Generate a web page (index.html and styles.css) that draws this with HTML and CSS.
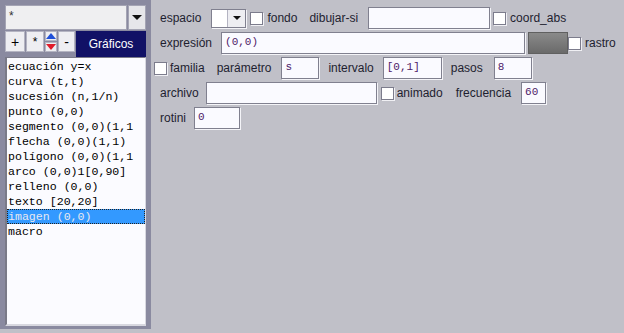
FILE: index.html
```html
<!DOCTYPE html>
<html lang="es">
<head>
  <meta charset="UTF-8">
  <title>Gráficos</title>
  <link rel="stylesheet" href="styles.css">
</head>
<body>

  <div class="app">
    <div class="side">
      <div class="combo">
        <div class="combo-field">*</div>
        <div class="combo-btn"><span class="tri"></span></div>
      </div>

      <div class="tools">
        <button class="tool tool-plus">+</button>
        <button class="tool tool-star">*</button>
        <div class="tool-arrows">
          <button class="arrow arrow-up"><span class="tri-up"></span></button>
          <button class="arrow arrow-down"><span class="tri-down"></span></button>
        </div>
        <button class="tool tool-minus">-</button>
        <div class="tab">Gráficos</div>
      </div>

      <ul class="list">
        <li>ecuación y=x</li>
        <li>curva (t,t)</li>
        <li>sucesión (n,1/n)</li>
        <li>punto (0,0)</li>
        <li>segmento (0,0)(1,1</li>
        <li>flecha (0,0)(1,1)</li>
        <li>polígono (0,0)(1,1</li>
        <li>arco (0,0)1[0,90]</li>
        <li>relleno (0,0)</li>
        <li>texto [20,20]</li>
        <li class="selected">imagen (0,0)</li>
        <li>macro</li>
      </ul>
    </div>

    <div class="main">
      <div class="row indent">
        <span class="lbl">espacio</span>
        <div class="mini-combo m10"><div class="mini-field"></div><div class="mini-btn"><span class="tri small"></span></div></div>
        <span class="chk m4"></span>
        <span class="lbl m4">fondo</span>
        <span class="lbl m12">dibujar-si</span>
        <div class="field m10 w122"></div>
        <span class="chk m3"></span>
        <span class="lbl m4">coord_abs</span>
      </div>

      <div class="row indent">
        <span class="lbl">expresión</span>
        <div class="field m9 w304">(0,0)</div>
        <div class="swatch m3"></div>
        <span class="chk"></span>
        <span class="lbl m4">rastro</span>
      </div>

      <div class="row">
        <span class="chk"></span>
        <span class="lbl m3">familia</span>
        <span class="lbl m12">parámetro</span>
        <div class="field m10 w38">s</div>
        <span class="lbl m9">intervalo</span>
        <div class="field m9 w59">[0,1]</div>
        <span class="lbl m9">pasos</span>
        <div class="field m11 w38">8</div>
      </div>

      <div class="row indent">
        <span class="lbl">archivo</span>
        <div class="field m7 w171"></div>
        <span class="chk m4"></span>
        <span class="lbl m3">animado</span>
        <span class="lbl m13">frecuencia</span>
        <div class="field m10 w25">60</div>
      </div>

      <div class="row indent">
        <span class="lbl">rotini</span>
        <div class="field m8 w46">0</div>
      </div>
    </div>
  </div>

</body>
</html>
```

FILE: styles.css
```css
body {
  margin: 0;
  padding: 0;
  background-color: #c0c0c8;
  font-family: "Liberation Sans", Arial, sans-serif;
  font-size: 12px;
  color: #1e1e30;
}

.app {
  display: flex;
  height: 333px;
  overflow: hidden;
}

/* left column */
.side {
  width: 151px;
  height: 329px;
  box-sizing: border-box;
  padding: 5px 5px 0 5px;
  background-color: #8a8aa0;
  display: flex;
  flex-direction: column;
}

.combo {
  display: flex;
  height: 25px;
}

.combo-field {
  width: 122px;
  box-sizing: border-box;
  border: 1px solid #a4a4b4;
  background-color: #efeff1;
  padding: 3px 3px;
  font-size: 12px;
  color: #333;
}

.combo-btn {
  width: 18px;
  margin-left: 1px;
  box-sizing: border-box;
  border: 1px solid #a4a4b4;
  background-color: #e6e6ea;
  display: flex;
  align-items: center;
  justify-content: center;
}

.tri {
  width: 0;
  height: 0;
  border-left: 5px solid transparent;
  border-right: 5px solid transparent;
  border-top: 5px solid #111;
}

.tri.small {
  border-left-width: 4px;
  border-right-width: 4px;
  border-top-width: 4px;
}

.tools {
  display: flex;
  align-items: flex-start;
  gap: 1px;
  margin-top: 1px;
  height: 26px;
}

.tool {
  height: 21px;
  padding: 0;
  border: 1px solid #b4b4c2;
  background-color: #eeeef2;
  font-family: "Liberation Sans", Arial, sans-serif;
  font-size: 14px;
  color: #000;
  cursor: pointer;
}

.tool-plus { width: 20px; }
.tool-star { width: 18px; font-size: 12px; }
.tool-minus { width: 17px; }

.tool-arrows {
  width: 12px;
  height: 21px;
  display: flex;
  flex-direction: column;
  gap: 1px;
}

.arrow {
  height: 10px;
  padding: 0;
  border: 1px solid #b4b4c2;
  background-color: #eeeef2;
  display: flex;
  align-items: center;
  justify-content: center;
}

.tri-up {
  width: 0;
  height: 0;
  border-left: 5px solid transparent;
  border-right: 5px solid transparent;
  border-bottom: 6px solid #1f4fd8;
}

.tri-down {
  width: 0;
  height: 0;
  border-left: 5px solid transparent;
  border-right: 5px solid transparent;
  border-top: 6px solid #e01b2a;
}

.tab {
  width: 70px;
  height: 26px;
  background-color: #111166;
  color: #fff;
  font-size: 12px;
  line-height: 26px;
  text-align: center;
}

.list {
  list-style: none;
  margin: 0;
  padding: 1px 0 0 0;
  height: 269px;
  box-sizing: border-box;
  background-color: #fbfbff;
  border-top: 1px solid #7a7a88;
  border-left: 2px solid #7a7a88;
  border-right: 1px solid #d8d8e0;
  border-bottom: 2px solid #d8d8e0;
  font-family: "Liberation Mono", "Courier New", monospace;
  font-size: 11.6px;
  color: #000;
}

.list li {
  height: 15px;
  line-height: 15px;
  padding-left: 1px;
  white-space: nowrap;
  overflow: hidden;
}

.list li.selected {
  background-color: #3399ff;
  color: #e8e8f0;
  outline: 1px dotted #222;
  outline-offset: -1px;
}

/* right side form */
.main {
  flex: 1;
  padding: 7px 0 0 3px;
}

.row {
  display: flex;
  align-items: center;
  height: 22px;
  margin-bottom: 3px;
  white-space: nowrap;
}

.row.indent {
  padding-left: 6px;
}

.lbl {
  line-height: 14px;
}

.field {
  height: 22px;
  box-sizing: border-box;
  border: 1px solid #80808f;
  box-shadow: 1px 1px 0 #f4f4f8;
  background-color: #fafaff;
  padding: 0 3px;
  font-family: "Liberation Mono", "Courier New", monospace;
  font-size: 11px;
  line-height: 19px;
  color: #4e2068;
}

.mini-combo {
  display: flex;
  width: 35px;
  height: 19px;
  box-sizing: border-box;
  border: 1px solid #80808f;
  box-shadow: 1px 1px 0 #f4f4f8;
  background-color: #fff;
}

.mini-field {
  flex: 1;
}

.mini-btn {
  width: 17px;
  background-color: #eeeef2;
  border-left: 1px solid #b4b4c2;
  display: flex;
  align-items: center;
  justify-content: center;
}

.chk {
  display: inline-block;
  width: 13px;
  height: 13px;
  box-sizing: border-box;
  border: 1px solid #7c7c8c;
  box-shadow: 1px 1px 0 #f0f0f4;
  background-color: #fff;
}

.swatch {
  width: 40px;
  height: 22px;
  box-sizing: border-box;
  border: 1px solid #606060;
  background: linear-gradient(#8a8a8a, #6a6a6a);
}

.w25 { width: 25px; }
.w38 { width: 38px; }
.w46 { width: 46px; }
.w59 { width: 59px; }
.w122 { width: 122px; }
.w171 { width: 171px; }
.w304 { width: 304px; }

.m1 { margin-left: 1px; }
.m2 { margin-left: 2px; }
.m3 { margin-left: 3px; }
.m4 { margin-left: 4px; }
.m7 { margin-left: 7px; }
.m8 { margin-left: 8px; }
.m9 { margin-left: 9px; }
.m10 { margin-left: 10px; }
.m11 { margin-left: 11px; }
.m12 { margin-left: 12px; }
.m13 { margin-left: 13px; }
.m14 { margin-left: 14px; }
.m15 { margin-left: 15px; }
```
